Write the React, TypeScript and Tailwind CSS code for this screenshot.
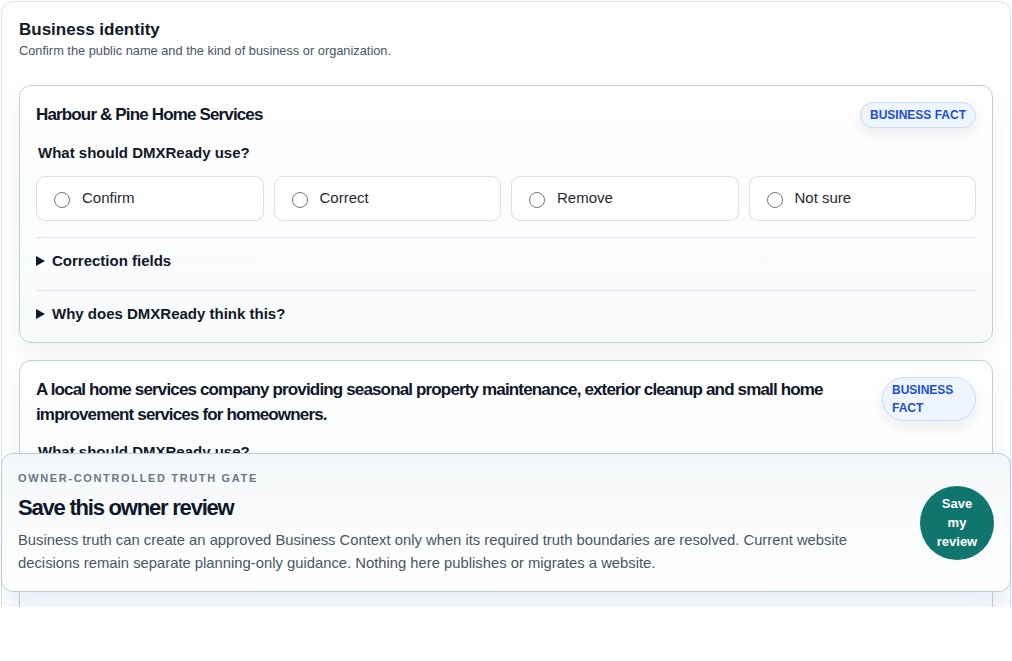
import React from "react";

function Radio({ label }: { label: string }) {
  return (
    <label className="flex h-[45px] items-center gap-[12px] rounded-[9px] border border-[#d9dfe7] bg-white pl-[17px] text-[15px] text-[#1f2937]">
      <span className="mt-[2px] block h-[16px] w-[16px] shrink-0 rounded-full border border-[#767676] bg-white" />
      <span>{label}</span>
    </label>
  );
}

function Summary({ label, last }: { label: string; last?: boolean }) {
  return (
    <div className={`border-t border-[#e3e7ec] pt-[12px] ${last ? "pb-[17px]" : "pb-[18px]"}`}>
      <div className="flex items-center gap-[7px] text-[15px] font-bold leading-[22px] text-[#111827]">
        <svg width="9" height="10" viewBox="0 0 9 10" className="shrink-0">
          <polygon points="0,0 9,5 0,10" fill="#111827" />
        </svg>
        <span>{label}</span>
      </div>
    </div>
  );
}

function Card({ title, narrowBadge }: { title: string; narrowBadge?: boolean }) {
  return (
    <div className="rounded-[12px] border border-[#bcd2d4] bg-gradient-to-b from-white to-[#f8fafc] px-[16px] pt-[16px] shadow-[0_8px_24px_rgba(15,23,42,0.06)]">
      <div className="flex items-start justify-between gap-[20px]">
        <div className="min-w-0 flex-1 text-[17px] font-bold leading-[25px] tracking-[-0.05em] text-[#0f172a]">
          {title}
        </div>
        <div
          className={`shrink-0 rounded-full border border-[#c9dcfb] bg-[#eff5ff] px-[9px] py-[3px] text-[12px] font-bold leading-[18px] text-[#1d4ed8] shadow-[0_6px_14px_rgba(15,23,42,0.08)] ${
            narrowBadge ? "w-[94px]" : ""
          }`}
        >
          BUSINESS FACT
        </div>
      </div>
      <div className="mt-[15px] pl-[2px] text-[15px] font-bold leading-[20px] text-[#111827]">
        What should DMXReady use?
      </div>
      <div className="mt-[13px] grid grid-cols-4 gap-[10px]">
        <Radio label="Confirm" />
        <Radio label="Correct" />
        <Radio label="Remove" />
        <Radio label="Not sure" />
      </div>
      <div className="mt-[16px]">
        <Summary label="Correction fields" />
        <Summary label="Why does DMXReady think this?" last />
      </div>
    </div>
  );
}

export default function App() {
  return (
    <div className="relative h-[607px] overflow-hidden bg-white font-['Liberation_Sans',Arial,sans-serif]">
      <section className="ml-[1px] mt-[1px] w-[1010px] rounded-[12px] border border-[#d8e7e7] bg-white px-[17px] pb-[40px] pt-[16px]">
        <h2 className="text-[17px] font-bold leading-[24px] text-[#111827]">Business identity</h2>
        <p className="text-[12.8px] leading-[18px] text-[#4b5563]">
          Confirm the public name and the kind of business or organization.
        </p>
        <div className="mt-[25px] flex flex-col gap-[17px]">
          <Card title="Harbour & Pine Home Services" />
          <Card
            title="A local home services company providing seasonal property maintenance, exterior cleanup and small home improvement services for homeowners."
            narrowBadge
          />
          <Card title="Service area" />
        </div>
      </section>

      <div className="absolute left-[1px] top-[453px] flex h-[139px] w-[1010px] items-center justify-between gap-6 rounded-[12px] border border-[#b8d0d2] bg-gradient-to-b from-[#f4f7f9] to-white px-[16px] shadow-[0_12px_28px_rgba(59,102,200,0.09)]">
        <div className="min-w-0 flex-1">
          <div className="text-[11px] font-bold uppercase leading-[16px] tracking-[0.15em] text-[#6b7785]">
            Owner-controlled truth gate
          </div>
          <div className="mt-[8px] text-[22px] font-bold leading-[28px] tracking-[-0.055em] text-[#0f172a]">
            Save this owner review
          </div>
          <p className="mt-[7px] text-[14.8px] leading-[23px] text-[#4b5563]">
            Business truth can create an approved Business Context only when its required truth boundaries are
            resolved. Current website decisions remain separate planning-only guidance. Nothing here publishes or
            migrates a website.
          </p>
        </div>
        <button className="flex h-[74px] w-[74px] shrink-0 items-center justify-center rounded-full bg-[#10766d] px-[13px] text-center text-[13px] font-bold leading-[19px] text-white">
          Save my review
        </button>
      </div>
    </div>
  );
}
